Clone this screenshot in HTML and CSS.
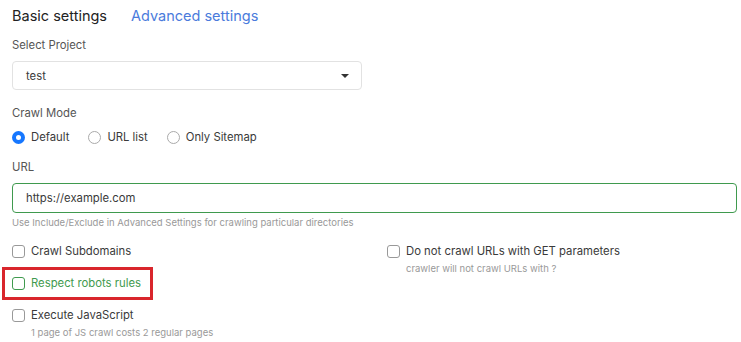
FILE: index.html
```html
<!DOCTYPE html>
<html lang="en">
<head>
  <meta charset="UTF-8">
  <meta name="viewport" content="width=device-width, initial-scale=1.0">
  <title>Crawl settings</title>
  <link rel="stylesheet" href="styles.css">
</head>
<body>
  <div class="settings">
    <div class="tabs">
      <span class="tab active">Basic settings</span>
      <span class="tab">Advanced settings</span>
    </div>

    <div class="field">
      <label class="label">Select Project</label>
      <div class="select">
        <span>test</span>
        <span class="caret"></span>
      </div>
    </div>

    <div class="field mode">
      <label class="label">Crawl Mode</label>
      <div class="radios">
        <label class="radio checked"><span class="dot"></span>Default</label>
        <label class="radio"><span class="dot"></span>URL list</label>
        <label class="radio"><span class="dot"></span>Only Sitemap</label>
      </div>
    </div>

    <div class="field url">
      <label class="label">URL</label>
      <div class="input">https://example.com</div>
      <div class="hint">Use Include/Exclude in Advanced Settings for crawling particular directories</div>
    </div>

    <div class="options">
      <div class="col">
        <div class="option">
          <label class="check"><span class="box"></span>Crawl Subdomains</label>
        </div>
        <div class="option marked">
          <label class="check green"><span class="box"></span>Respect robots rules</label>
        </div>
        <div class="option">
          <label class="check"><span class="box"></span>Execute JavaScript</label>
          <div class="hint sub">1 page of JS crawl costs 2 regular pages</div>
        </div>
      </div>
      <div class="col">
        <div class="option">
          <label class="check"><span class="box"></span>Do not crawl URLs with GET parameters</label>
          <div class="hint sub">crawler will not crawl URLs with ?</div>
        </div>
      </div>
    </div>
  </div>
</body>
</html>
```

FILE: styles.css
```css
body {
  margin: 0;
  font-family: Inter, "Noto Sans", sans-serif;
  color: #3a3a3a;
  background: #fff;
}

.settings {
  padding: 5px 5px 0 12px;
}

.tabs {
  display: flex;
  gap: 24px;
  font-size: 14.5px;
  line-height: 22px;
  margin-bottom: 10px;
}

.tab {
  color: #4a7bdc;
}

.tab.active {
  color: #222;
}

.field {
  margin-bottom: 15px;
}

.label {
  display: block;
  font-size: 11.3px;
  line-height: 16px;
  color: #555;
  margin-bottom: 8px;
}

.select {
  width: 350px;
  height: 29px;
  box-sizing: border-box;
  border: 1px solid #e2e2e2;
  border-radius: 4px;
  display: flex;
  align-items: center;
  justify-content: space-between;
  padding: 0 12px 0 13px;
  font-size: 11.3px;
}

.caret {
  width: 0;
  height: 0;
  border-left: 4px solid transparent;
  border-right: 4px solid transparent;
  border-top: 4px solid #333;
}

.field.mode {
  margin-bottom: 14px;
}

.radios {
  display: flex;
  gap: 19px;
}

.radio {
  display: flex;
  align-items: center;
  gap: 6px;
  font-size: 11.3px;
  line-height: 16px;
}

.dot {
  width: 13px;
  height: 13px;
  box-sizing: border-box;
  border: 1px solid #aaa;
  border-radius: 50%;
}

.radio.checked .dot {
  border: 4px solid #1677ff;
  background: #fff;
}

.field.url {
  margin-bottom: 13px;
}

.input {
  width: 725px;
  height: 30px;
  box-sizing: border-box;
  border: 1px solid #3f9a4e;
  border-radius: 4px;
  display: flex;
  align-items: center;
  padding-left: 13px;
  font-size: 11.3px;
}

.hint {
  font-size: 9.5px;
  line-height: 14px;
  color: #999;
  margin-top: 3px;
}

.hint.sub {
  padding-left: 19px;
}

.options {
  display: grid;
  grid-template-columns: 375px 1fr;
}

.option {
  margin-bottom: 16px;
}

.check {
  display: flex;
  align-items: center;
  gap: 6px;
  font-size: 11.3px;
  line-height: 16px;
}

.box {
  width: 13px;
  height: 13px;
  box-sizing: border-box;
  border: 1px solid #999;
  border-radius: 3px;
}

.check.green {
  color: #3f9a4e;
}

.check.green .box {
  border-color: #3f9a4e;
}

.marked {
  position: relative;
}

.marked::after {
  content: "";
  position: absolute;
  left: -10px;
  top: -8px;
  width: 151px;
  height: 33px;
  box-sizing: border-box;
  border: 3px solid #d9262c;
}
```
